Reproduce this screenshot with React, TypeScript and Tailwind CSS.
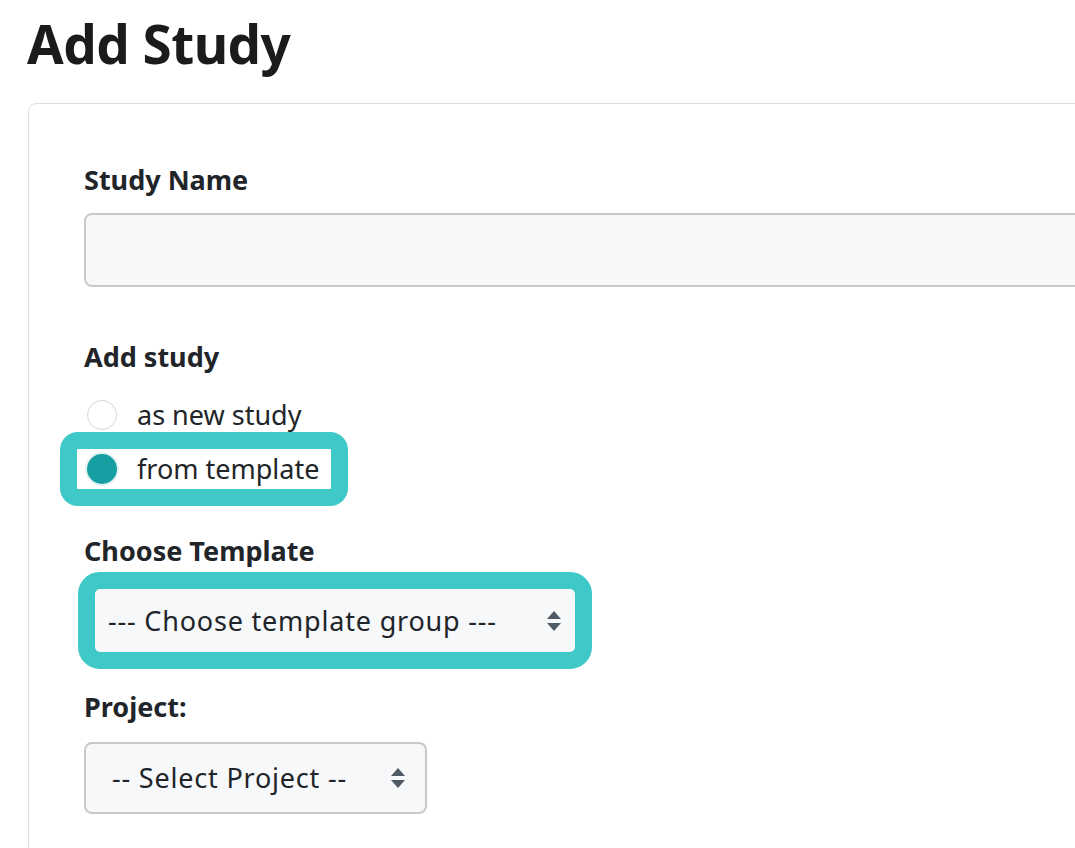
import React from "react";

function SelectArrows() {
  return (
    <svg width="16" height="24" viewBox="0 0 16 24" className="shrink-0">
      <path d="M8 2 L15 10 L1 10 Z" fill="#4f5a64" />
      <path d="M1 14 L15 14 L8 22 Z" fill="#4f5a64" />
    </svg>
  );
}

export default function App() {
  const font = { fontFamily: '"Noto Sans", "Open Sans", Arial, sans-serif' };

  return (
    <div className="w-[1075px] h-[848px] overflow-hidden bg-white text-[#212529]" style={font}>
      <h1 className="pl-[27px] pt-[11px] text-[53px] leading-[66px] font-bold text-[#1b1b1b] tracking-[-0.5px]">
        Add Study
      </h1>

      <div className="mt-[26px] ml-[28px] w-[1160px] border border-[#dedede] rounded-[8px] px-[55px] pt-[59px] pb-[40px]">
        {/* Study name */}
        <label className="block text-[27px] leading-[33px] font-bold">Study Name</label>
        <div className="mt-[17px] h-[74px] w-full bg-[#f7f8fa] border-2 border-[#c9c9c9] rounded-[8px]" />

        {/* Add study radios */}
        <div className="mt-[53px] text-[27px] leading-[33px] font-bold">Add study</div>
        <div className="mt-[15px] flex flex-col">
          <div className="h-[54px] flex items-center gap-[20px]">
            <span className="ml-[3px] w-[30px] h-[30px] rounded-full border border-[#d6d6d6] bg-white" />
            <span className="text-[27px]">as new study</span>
          </div>
          <div className="relative h-[54px] flex items-center gap-[20px]">
            <span className="ml-[3px] w-[30px] h-[30px] rounded-full bg-[#159fa2] ring-2 ring-[#e3f2f3]" />
            <span className="text-[27px]">from template</span>
            <div className="absolute left-[-24px] top-[-10px] w-[288px] h-[74px] border-[17px] border-[#3ec8c8] rounded-[18px]" />
          </div>
        </div>

        {/* Choose template */}
        <div className="mt-[38px] text-[27px] leading-[33px] font-bold">Choose Template</div>
        <div className="relative mt-[18px] w-[493px] h-[72px] bg-[#f7f8fa] border border-[#c6c6c6] rounded-[8px] flex items-center justify-between pl-[23px] pr-[14px]">
          <span className="text-[27px] tracking-[0.8px]">--- Choose template group ---</span>
          <SelectArrows />
          <div className="absolute left-[-7px] right-[-16px] top-[-14px] bottom-[-13px] border-[17px] border-[#3ec8c8] rounded-[22px]" />
        </div>

        {/* Project */}
        <div className="mt-[33px] text-[27px] leading-[33px] font-bold">Project:</div>
        <div className="mt-[19px] w-[343px] h-[72px] bg-[#f7f8fa] border-2 border-[#c9c9c9] rounded-[8px] flex items-center justify-between pl-[26px] pr-[19px]">
          <span className="text-[27px] tracking-[0.8px]">-- Select Project --</span>
          <SelectArrows />
        </div>
      </div>
    </div>
  );
}
